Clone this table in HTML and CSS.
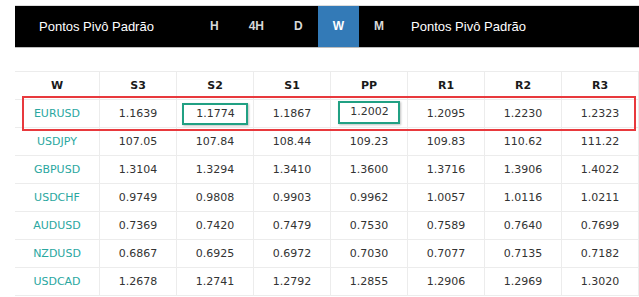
FILE: index.html
```html
<!DOCTYPE html>
<html lang="pt">
<head>
  <meta charset="UTF-8" />
  <title>Pontos Pivô Padrão</title>
  <link rel="stylesheet" href="styles.css">
</head>
<body>
  <header class="bar">
    <div class="title">Pontos Pivô Padrão</div>
    <ul class="tabs">
      <li>H</li>
      <li>4H</li>
      <li>D</li>
      <li class="active">W</li>
      <li>M</li>
    </ul>
    <div class="title title-right">Pontos Pivô Padrão</div>
  </header>

  <div class="table-wrap">
    <table class="pivots">
      <thead>
        <tr><th>W</th><th>S3</th><th>S2</th><th>S1</th><th>PP</th><th>R1</th><th>R2</th><th>R3</th></tr>
      </thead>
      <tbody>
        <tr><td class="pair">EURUSD</td><td>1.1639</td><td><span class="mark">1.1774</span></td><td>1.1867</td><td><span class="mark mark-pp">1.2002</span></td><td>1.2095</td><td>1.2230</td><td>1.2323</td></tr>
        <tr><td class="pair">USDJPY</td><td>107.05</td><td>107.84</td><td>108.44</td><td>109.23</td><td>109.83</td><td>110.62</td><td>111.22</td></tr>
        <tr><td class="pair">GBPUSD</td><td>1.3104</td><td>1.3294</td><td>1.3410</td><td>1.3600</td><td>1.3716</td><td>1.3906</td><td>1.4022</td></tr>
        <tr><td class="pair">USDCHF</td><td>0.9749</td><td>0.9808</td><td>0.9903</td><td>0.9962</td><td>1.0057</td><td>1.0116</td><td>1.0211</td></tr>
        <tr><td class="pair">AUDUSD</td><td>0.7369</td><td>0.7420</td><td>0.7479</td><td>0.7530</td><td>0.7589</td><td>0.7640</td><td>0.7699</td></tr>
        <tr><td class="pair">NZDUSD</td><td>0.6867</td><td>0.6925</td><td>0.6972</td><td>0.7030</td><td>0.7077</td><td>0.7135</td><td>0.7182</td></tr>
        <tr><td class="pair">USDCAD</td><td>1.2678</td><td>1.2741</td><td>1.2792</td><td>1.2855</td><td>1.2906</td><td>1.2969</td><td>1.3020</td></tr>
      </tbody>
    </table>
    <div class="highlight"></div>
  </div>
</body>
</html>
```

FILE: styles.css
```css
body {
  margin: 5px 0 0 15px;
  background: #ffffff;
  font-family: 'DejaVu Sans', Verdana, sans-serif;
}

.bar {
  display: flex;
  align-items: stretch;
  height: 41px;
  background: #000000;
  border-top: 1px solid #dcdcdc;
  border-bottom: 1px solid #bdbdbd;
  font-family: 'Liberation Sans', Arial, sans-serif;
}

.title {
  color: #ffffff;
  font-size: 13px;
  line-height: 41px;
  padding-left: 24px;
  width: 156px;
}

.title-right {
  padding-left: 12px;
  width: auto;
}

.tabs {
  display: flex;
  list-style: none;
  margin: 0;
  padding: 0;
}

.tabs li {
  padding: 0 15px;
  line-height: 41px;
  font-size: 12px;
  font-weight: bold;
  color: #d8d8d8;
}

.tabs li.active {
  background: #337ab7;
  color: #ffffff;
}

.table-wrap {
  position: relative;
  margin-top: 23px;
}

.pivots {
  width: 624px;
  border-collapse: collapse;
  table-layout: fixed;
  font-size: 11px;
}

.pivots th,
.pivots td {
  height: 27px;
  padding: 0;
  text-align: center;
  border: 1px solid #ececec;
  color: #333333;
}

.pivots th:first-child,
.pivots td:first-child {
  width: 84px;
  border-left: none;
}

.pivots th {
  font-weight: bold;
  color: #1a1a1a;
}

.pivots td.pair {
  color: #2aa79f;
}

.mark {
  display: inline-block;
  padding: 2px 11px 2px 12px;
  border: 2px solid #21a083;
  box-shadow: 1px 1px 2px rgba(0, 0, 0, 0.25);
  line-height: 14px;
}

.mark-pp {
  padding: 2px 9px 3px 10px;
  margin-top: -3px;
}

.highlight {
  position: absolute;
  left: 7px;
  top: 25px;
  width: 610px;
  height: 31px;
  border: 2px solid #e8393d;
}
```
